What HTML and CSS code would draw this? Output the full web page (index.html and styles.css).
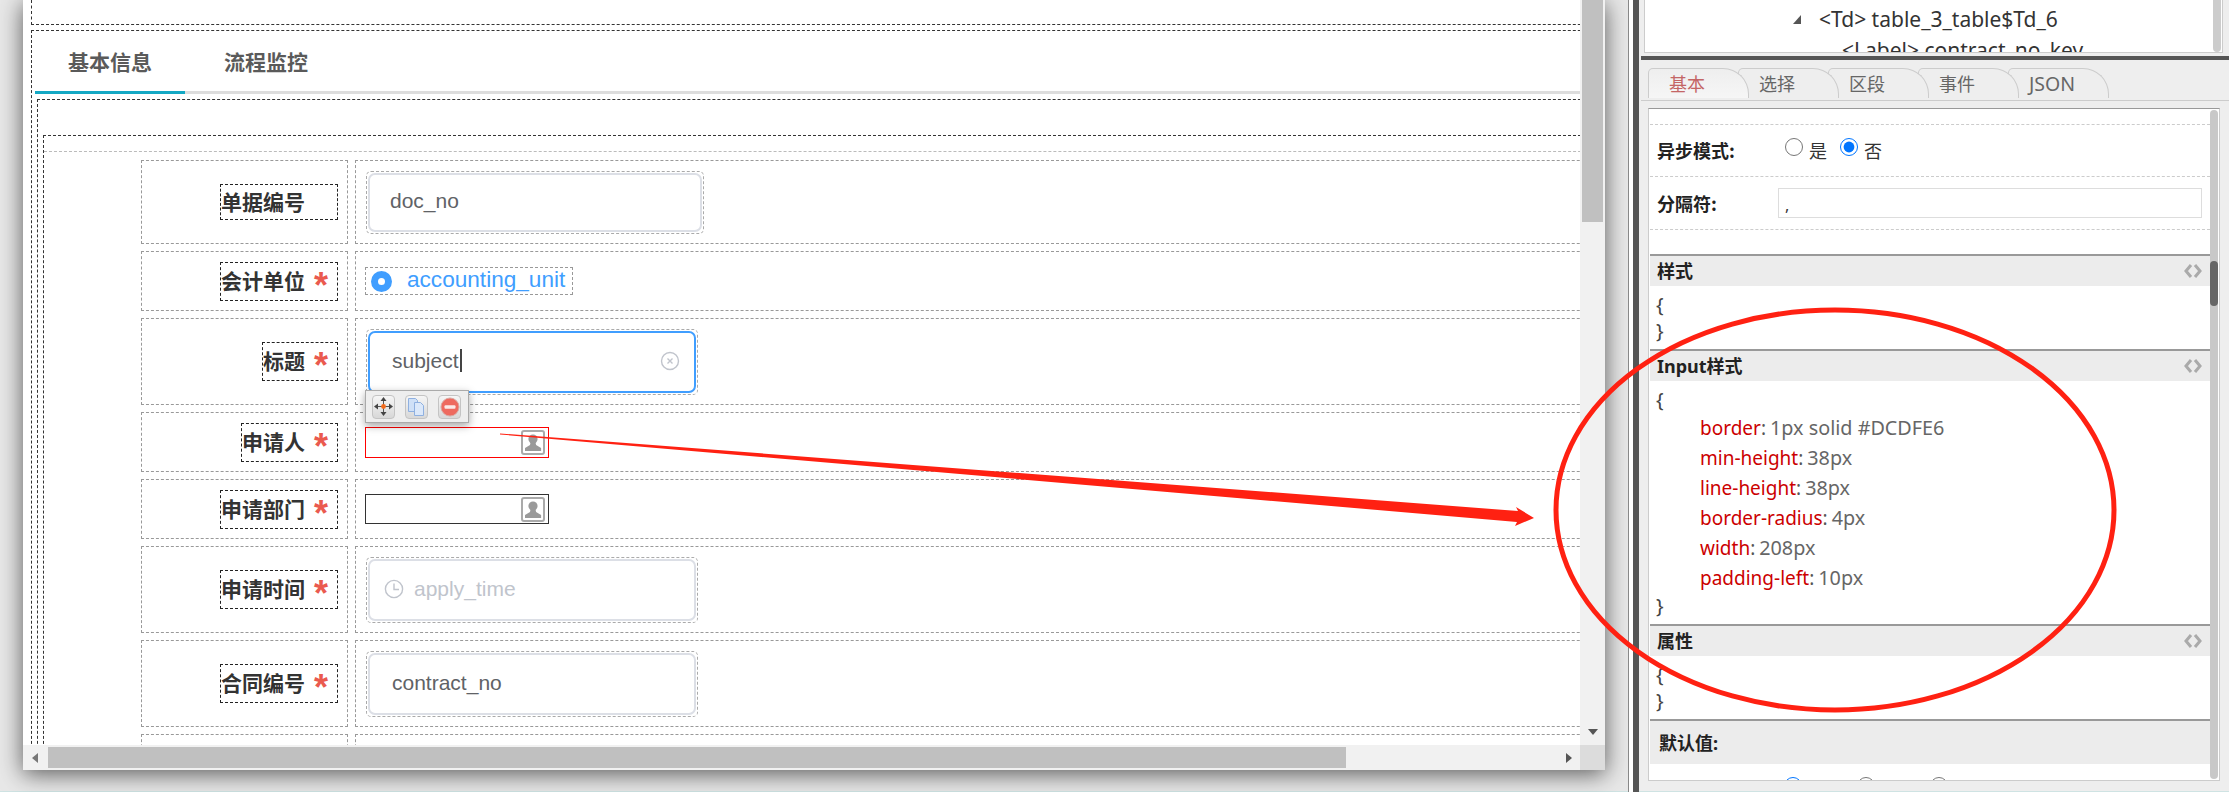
FILE: index.html
```html
<!DOCTYPE html>
<html lang="zh-CN">
<head>
<meta charset="utf-8">
<title>表单设计器</title>
<link rel="stylesheet" href="styles.css">
</head>
<body>
<div class="page">
  <section class="stage">
    <div class="window">
      <div class="content">
        <div class="top-frame"></div>
        <div class="main-frame">
          <div class="tabbar">
            <div class="tab active">基本信息</div>
            <div class="tab">流程监控</div>
          </div>
          <div class="inner-frame">
            <div class="form-frame">
              <div class="form-rule">
                <div class="form-grid">
                  <div class="cell cell-label row-a"><div class="lab lab-plain"><span>单据编号</span><span class="star hidden">*</span></div></div>
                  <div class="cell row-a"><div class="field field-wide"><div class="inner"><span class="val">doc_no</span></div></div></div>

                  <div class="cell cell-label row-s"><div class="lab"><span>会计单位</span><span class="star">*</span></div></div>
                  <div class="cell row-s"><div class="radio-field"><span class="radio-dot"></span><span class="radio-text">accounting_unit</span></div></div>

                  <div class="cell cell-label row-t"><div class="lab"><span>标题</span><span class="star">*</span></div></div>
                  <div class="cell row-t cell-anchor">
                    <div class="field"><div class="inner focus"><span class="val caret">subject</span>
                      <svg class="clear" width="20" height="20" viewBox="0 0 20 20"><circle cx="10" cy="10" r="8.5" fill="none" stroke="#c0c4cc" stroke-width="1.4"/><path d="M7.5 7.5l5 5M12.5 7.5l-5 5" stroke="#c0c4cc" stroke-width="1.4"/></svg>
                    </div></div>
                    <div class="toolbar">
                      <span class="tool"><svg width="19" height="19" viewBox="0 0 19 19"><path d="M9.5 0l3 4h-6zM9.5 19l-3-4h6zM0 9.5l4-3v6zM19 9.5l-4 3v-6z" fill="#444"/><path d="M9 4h1v11H9zM4 9h11v1H4z" fill="#555"/><circle cx="9.5" cy="9.5" r="2.4" fill="#f26a1b"/></svg></span>
                      <span class="tool"><svg width="19" height="20" viewBox="0 0 19 20"><path d="M1.5 1.5h7l2 2v11h-9z" fill="#cfe0f7" stroke="#8fb0e0"/><path d="M7.5 5.5h6l3 3v10h-9z" fill="#dbe8fa" stroke="#8fb0e0"/></svg></span>
                      <span class="tool"><svg width="20" height="20" viewBox="0 0 20 20"><circle cx="10" cy="10" r="9" fill="#ee6a5f" stroke="#d9a8a2"/><rect x="4.5" y="8.3" width="11" height="3.4" rx="1" fill="#fbe9e7"/></svg></span>
                    </div>
                  </div>

                  <div class="cell cell-label row-s"><div class="lab"><span>申请人</span><span class="star">*</span></div></div>
                  <div class="cell row-s"><div class="pick pick-red"><span class="pick-btn"><svg width="20" height="21" viewBox="0 0 20 21"><circle cx="10" cy="7" r="4.6" fill="#9a9a9a"/><path d="M7.5 10.5h5l.6 2.5 5 3v3H2v-3l5-3z" fill="#9a9a9a"/></svg></span></div></div>

                  <div class="cell cell-label row-s"><div class="lab"><span>申请部门</span><span class="star">*</span></div></div>
                  <div class="cell row-s"><div class="pick pick-dark"><span class="pick-btn"><svg width="20" height="21" viewBox="0 0 20 21"><circle cx="10" cy="7" r="4.6" fill="#9a9a9a"/><path d="M7.5 10.5h5l.6 2.5 5 3v3H2v-3l5-3z" fill="#9a9a9a"/></svg></span></div></div>

                  <div class="cell cell-label row-t"><div class="lab"><span>申请时间</span><span class="star">*</span></div></div>
                  <div class="cell row-t"><div class="field"><div class="inner inner-date">
                    <svg class="clock" width="20" height="20" viewBox="0 0 20 20"><circle cx="10" cy="10" r="8.6" fill="none" stroke="#c0c4cc" stroke-width="1.4"/><path d="M10 4.5V10.5H15" fill="none" stroke="#c0c4cc" stroke-width="1.4"/></svg>
                    <span class="val placeholder">apply_time</span></div></div></div>

                  <div class="cell cell-label row-t"><div class="lab"><span>合同编号</span><span class="star">*</span></div></div>
                  <div class="cell row-t"><div class="field"><div class="inner"><span class="val">contract_no</span></div></div></div>

                  <div class="cell cell-label row-s"><div class="lab"></div></div>
                  <div class="cell row-s"></div>
                </div>
              </div>
            </div>
          </div>
        </div>
      </div>
      <div class="vscroll"><div class="vthumb"></div><span class="arrow-down"></span></div>
      <div class="hscroll"><span class="arrow-left"></span><div class="hthumb"></div><span class="arrow-right"></span></div>
      <div class="corner"></div>
    </div>
  </section>

  <div class="band"></div>

  <aside class="inspector">
    <div class="tree">
      <div class="tree-list">
        <div class="tree-row tree-row-1"><span class="tree-toggle"></span><span>&lt;Td&gt; table_3_table$Td_6</span></div>
        <div class="tree-row tree-row-2"><span>&lt;Label&gt; contract_no_key</span></div>
      </div>
      <div class="tree-scroll"></div>
    </div>
    <div class="divider"></div>
    <div class="ins-tabs">
      <div class="ins-tab ins-tab-on">基本</div>
      <div class="ins-tab ins-tab-2">选择</div>
      <div class="ins-tab ins-tab-3">区段</div>
      <div class="ins-tab ins-tab-4">事件</div>
      <div class="ins-tab ins-tab-5">JSON</div>
    </div>
    <div class="panel">
      <div class="panel-body">
        <div class="prop prop-gap"></div>
        <div class="prop prop-async">
          <div class="prop-label">异步模式:</div>
          <label class="opt"><input type="radio" name="async"><span>是</span></label>
          <label class="opt"><input type="radio" name="async" checked><span>否</span></label>
        </div>
        <div class="prop prop-sep">
          <div class="prop-label">分隔符:</div>
          <div class="text-input">,</div>
        </div>
        <div class="spacer"></div>

        <div class="sec-head"><span>样式</span><svg width="18" height="14" viewBox="0 0 18 14"><path d="M7 1L2 7l5 6M11 1l5 6-5 6" fill="none" stroke="#aaa" stroke-width="3"/></svg></div>
        <div class="code"><div class="brace">{</div><div class="brace">}</div></div>

        <div class="sec-head"><span>Input样式</span><svg width="18" height="14" viewBox="0 0 18 14"><path d="M7 1L2 7l5 6M11 1l5 6-5 6" fill="none" stroke="#aaa" stroke-width="3"/></svg></div>
        <div class="code">
          <div class="brace">{</div>
          <div class="decl"><span class="k">border</span><span class="c">:</span><span class="v">1px solid #DCDFE6</span></div>
          <div class="decl"><span class="k">min-height</span><span class="c">:</span><span class="v">38px</span></div>
          <div class="decl"><span class="k">line-height</span><span class="c">:</span><span class="v">38px</span></div>
          <div class="decl"><span class="k">border-radius</span><span class="c">:</span><span class="v">4px</span></div>
          <div class="decl"><span class="k">width</span><span class="c">:</span><span class="v">208px</span></div>
          <div class="decl"><span class="k">padding-left</span><span class="c">:</span><span class="v">10px</span></div>
          <div class="brace">}</div>
        </div>

        <div class="sec-head"><span>属性</span><svg width="18" height="14" viewBox="0 0 18 14"><path d="M7 1L2 7l5 6M11 1l5 6-5 6" fill="none" stroke="#aaa" stroke-width="3"/></svg></div>
        <div class="code"><div class="brace">{</div><div class="brace">}</div></div>

        <div class="sec-head sec-head-tall"><span>默认值:</span></div>
        <div class="default-row">
          <input type="radio" name="def" checked>
          <input type="radio" name="def">
          <input type="radio" name="def">
        </div>
      </div>
      <div class="panel-scroll"><div class="panel-thumb"></div></div>
    </div>
  </aside>

  <svg class="annot" width="2229" height="792" viewBox="0 0 2229 792">
    <ellipse cx="1835" cy="510" rx="279" ry="200" fill="none" stroke="#ff2112" stroke-width="5"/>
    <polygon points="500,433.5 1518,511 1516,507 1534,518 1515,526 1517,522 500,434.5" fill="#ff2112"/>
  </svg>
</div>
</body>
</html>
```
FILE: styles.css
```css
* { box-sizing: border-box; }
html, body { margin: 0; padding: 0; }
body { width: 2229px; height: 792px; overflow: hidden; background: #eee; font-family: "Liberation Sans", "Noto Sans CJK SC", sans-serif; }

.page { position: relative; display: flex; width: 2229px; height: 792px; overflow: hidden; }

/* left: floating design window */
.stage { flex: none; width: 1628px; height: 792px; padding: 0 23px 21px; background: #e8e8e8; border-bottom: 1px solid #cfe3e3; }
.window { display: grid; grid-template-columns: 1557px 25px; grid-template-rows: 745px 25px; width: 1582px; height: 770px; background: #fff; box-shadow: 0 4px 22px rgba(0, 0, 0, .62); }
.content { overflow: hidden; padding-left: 8px; background: #fff; }

.top-frame { width: 1700px; height: 25px; border-left: 1px dashed #333; border-bottom: 1px dashed #333; }
.main-frame { width: 1700px; margin-top: 5px; border-left: 1px dashed #333; border-top: 1px dashed #333; }

.tabbar { display: flex; gap: 6px; height: 63px; margin-left: 3px; border-bottom: 3px solid #ddd; }
.tab { height: 63px; padding: 0 33px; font: 700 21px/60px "Noto Sans CJK SC", sans-serif; color: #5a5a5a; }
.tab.active { border-bottom: 3px solid #13a8c4; }

.inner-frame { margin: 5px 0 0 5px; padding: 35px 0 0 5px; border-left: 1px dashed #333; border-top: 1px dashed #333; }
.form-frame { border-left: 1px dashed #333; border-top: 1px dashed #333; padding-top: 15px; }
.form-rule { border-top: 1px dashed #bbb; padding: 8px 0 0 97px; }
.form-grid { display: grid; grid-template-columns: 207px 1400px; column-gap: 7px; row-gap: 7px; }

.cell { display: flex; align-items: center; border: 1px dashed #999; padding-left: 9px; }
.cell-label { justify-content: flex-end; padding: 0 9px 0 0; }
.cell-anchor { position: relative; }
.row-a { height: 84px; }
.row-s { height: 60px; }
.row-t { height: 87px; }

.lab { display: flex; align-items: center; height: 39px; padding-bottom: 3px; border: 1px dashed #222; font: 700 21px/30px "Noto Sans CJK SC", sans-serif; color: #333; }
.lab-plain { height: 36px; padding-bottom: 2px; }
.star { width: 32px; height: 20px; text-align: center; font: 700 36px/32px "Liberation Sans", sans-serif; color: #ea5a4e; overflow: visible; }
.hidden { visibility: hidden; }

.field { width: 332px; height: 66px; margin-left: 1px; padding: 1px; border: 1px dashed #aaa; border-radius: 5px; }
.field-wide { width: 338px; height: 63px; }
.inner { display: flex; align-items: center; height: 100%; padding: 0 0 2px 22px; border: 2px solid #dcdfe6; border-radius: 7px; }
.field-wide .inner { padding-left: 20px; }
.inner.focus { border-color: #409eff; }
.inner-date { padding-left: 14px; }
.val { font-size: 21px; color: #606266; }
.caret { padding-right: 1px; border-right: 2px solid #444; line-height: 23px; }
.placeholder { color: #c0c4cc; margin-left: 10px; }
.clear { margin-left: auto; margin-right: 14px; }

.radio-field { display: flex; align-items: center; width: 208px; height: 28px; padding-left: 5px; border: 1px dashed #999; }
.radio-dot { width: 21px; height: 21px; border-radius: 50%; border: 7px solid #409eff; background: #fff; }
.radio-text { margin-left: 15px; padding-bottom: 2px; font-size: 22.6px; color: #409eff; }

.pick { display: flex; align-items: center; justify-content: flex-end; width: 184px; padding-right: 3px; background: #fff; }
.pick-red { height: 31px; border: 1px solid #f00; }
.pick-dark { height: 30px; border: 1px solid #333; }
.pick-btn { display: flex; align-items: center; justify-content: center; width: 24px; height: 25px; border: 2px solid #aaa; border-radius: 3px; background: #fff; }

.toolbar { position: absolute; left: 9px; top: 71px; z-index: 3; display: flex; gap: 10px; align-items: center; width: 104px; height: 33px; padding-left: 6px; background: #eee; border: 1px solid #aaa; box-shadow: 0 3px 8px rgba(0, 0, 0, .35); }
.tool { display: flex; align-items: center; justify-content: center; width: 23px; height: 24px; border: 1px solid #c4c4c4; border-radius: 4px; background: linear-gradient(#f6f6f6, #d8d8d8); }

/* window scrollbars */
.vscroll { display: flex; flex-direction: column; align-items: center; background: #f1f1f1; }
.vthumb { width: 21px; height: 222px; background: #c0c0c0; }
.arrow-down { width: 0; height: 0; margin-top: 507px; border-left: 5px solid transparent; border-right: 5px solid transparent; border-top: 6px solid #555; }
.hscroll { display: flex; align-items: center; background: #f1f1f1; padding-left: 9px; }
.hthumb { width: 1298px; height: 21px; margin-left: 10px; background: #c0c0c0; }
.arrow-left { width: 0; height: 0; border-top: 5px solid transparent; border-bottom: 5px solid transparent; border-right: 6px solid #777; }
.arrow-right { width: 0; height: 0; margin-left: auto; margin-right: 8px; border-top: 5px solid transparent; border-bottom: 5px solid transparent; border-left: 6px solid #555; }
.corner { background: #dcdcdc; }

.band { flex: none; width: 11px; height: 792px; background: #fff; border-left: 1px solid #888; border-right: 6px solid #555; }

/* right: inspector */
.inspector { flex: 1; height: 792px; background: #eee; display: flex; flex-direction: column; border-bottom: 1px solid #cfe3e3; font-family: "Noto Sans", "Noto Sans CJK SC", sans-serif; }
.tree { display: flex; flex: none; justify-content: space-between; width: 579px; height: 53px; margin-left: 5px; padding-right: 1px; background: #fff; border: 1px solid #ccc; border-top: 0; overflow: hidden; }
.tree-list { padding-top: 4px; font-size: 21px; line-height: 31px; color: #333; }
.tree-row { display: flex; align-items: center; height: 31px; white-space: nowrap; }
.tree-row-1 { padding-left: 148px; }
.tree-row-2 { padding-left: 197px; }
.tree-toggle { width: 8px; height: 9px; margin-right: 18px; background: #555; clip-path: polygon(100% 0, 100% 100%, 0 100%); }
.tree-scroll { width: 8px; height: 52px; background: #ccc; border-radius: 0 0 4px 4px; }
.divider { flex: none; width: 588px; height: 4px; margin: 3px 0 0 2px; background: #555; }

.ins-tabs { display: flex; flex: none; height: 33px; margin: 8px 0 0 2px; padding-left: 7px; border-bottom: 1px solid #ccc; }
.ins-tab { position: relative; flex: none; width: 101px; height: 30px; margin-right: -11px; padding-left: 20px; background: #eee; border: 1px solid #ccc; border-bottom: 0; border-radius: 5px 26px 0 0; font-size: 18px; line-height: 30px; color: #666; }
.ins-tab-on { z-index: 5; background: linear-gradient(#eee, #f6f6f6); color: #c46666; }
.ins-tab-2 { z-index: 4; }
.ins-tab-3 { z-index: 3; }
.ins-tab-4 { z-index: 2; }
.ins-tab-5 { z-index: 1; font-size: 19.5px; }

.panel { display: flex; flex: none; width: 572px; height: 673px; margin: 7px 0 0 9px; padding-left: 1px; background: #fff; border: 1px solid #ccc; border-top-color: #999; overflow: hidden; }
.panel-body { flex: none; width: 560px; height: 671px; overflow: hidden; }
.panel-scroll { flex: none; width: 8px; height: 669px; margin: 1px 0 0 0; background: #c8c8c8; border-radius: 4px; }
.panel-thumb { width: 8px; height: 45px; margin-top: 151px; background: #666; border-radius: 4px; }

.prop { border-bottom: 1px dashed #ccc; }
.prop-gap { height: 16px; }
.prop-async { display: flex; align-items: center; height: 52px; padding: 0 0 2px 7px; }
.prop-sep { display: flex; align-items: center; height: 53px; padding-left: 7px; }
.prop-label { width: 121px; font: 700 18px/26px "Noto Sans CJK SC", sans-serif; color: #222; }
.prop-async .prop-label { width: 128px; }
.opt { display: flex; align-items: center; gap: 6px; width: 55px; font: 400 18px/26px "Noto Sans CJK SC", sans-serif; color: #333; }
.opt input { flex: none; width: 18px; height: 18px; margin: -6px 0 0; }
.text-input { width: 424px; height: 30px; padding: 6px 0 0 6px; border: 1px solid #ddd; font-size: 16px; line-height: 20px; color: #333; }
.spacer { height: 24px; }

.sec-head { display: flex; align-items: center; justify-content: space-between; height: 32px; padding: 0 8px 0 7px; background: #ececec; border-top: 2px solid #999; font: 700 18px/26px "Noto Sans", "Noto Sans CJK SC", sans-serif; color: #222; }
.sec-head-tall { height: 45px; padding-left: 9px; }
.code { padding: 6px 0 5px 6px; font-size: 20px; color: #444; }
.brace { height: 26px; line-height: 26px; }
.decl { height: 30px; padding-left: 44px; font-size: 19px; line-height: 30px; white-space: nowrap; }
.k { color: #c00; }
.c { color: #555; margin-right: 4px; }
.v { color: #666; font-size: 19.8px; }
.default-row { display: flex; gap: 55px; padding: 13px 0 0 134px; }
.default-row input { flex: none; width: 18px; height: 18px; margin: 0; }

/* hand-drawn annotations lying over everything */
.annot { position: absolute; left: 0; top: 0; z-index: 10; pointer-events: none; }
```
